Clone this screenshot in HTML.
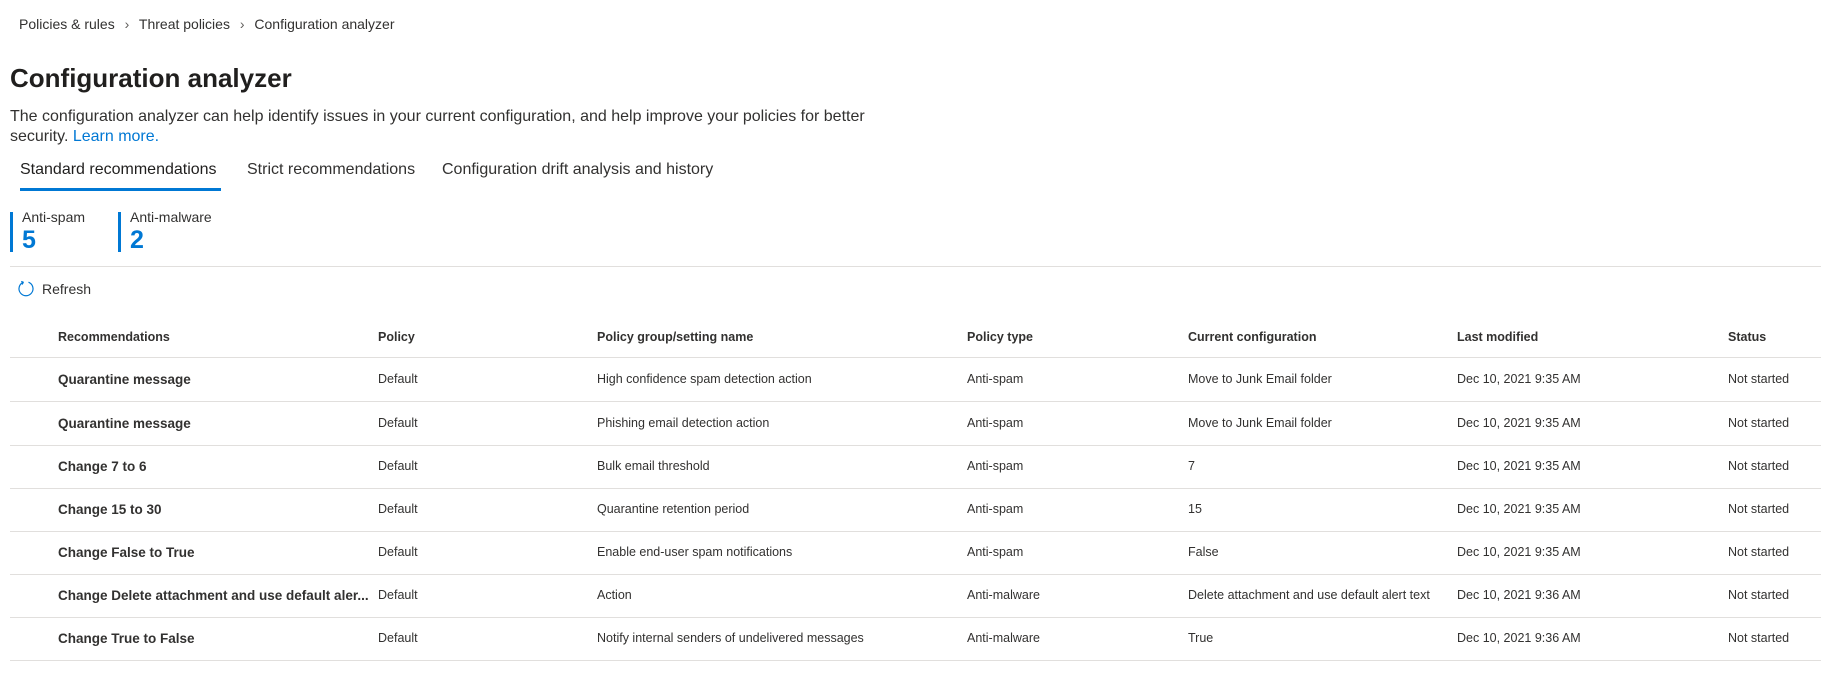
<!DOCTYPE html>
<html><head><style>
body{margin:0;width:1821px;height:678px;background:#fff;font-family:"Liberation Sans",sans-serif;color:#323130;position:relative;overflow:hidden}
.a{position:absolute;white-space:nowrap}
.row{position:absolute;left:10px;right:0;height:43px;border-bottom:1px solid #e1dfdd}
.row span{position:absolute;top:0;line-height:43px;font-size:12.5px;white-space:nowrap}
.row span.b{font-size:13.5px;font-weight:bold;color:#323130}
</style></head><body>
<div class="a" style="left:19px;top:16px;font-size:14px;color:#323130">Policies &amp; rules <span style="color:#605e5c;margin:0 6px">&#8250;</span> Threat policies <span style="color:#605e5c;margin:0 6px">&#8250;</span> Configuration analyzer</div>
<div class="a" style="left:10px;top:63px;font-size:26px;font-weight:bold;color:#201f1e">Configuration analyzer</div>
<div class="a" style="left:10px;top:107px;font-size:16px;line-height:20px;white-space:normal;width:880px">The configuration analyzer can help identify issues in your current configuration, and help improve your policies for better security. <span style="color:#0078d4">Learn more.</span></div>
<div class="a" style="left:20px;top:161px;font-size:16px;color:#201f1e">Standard recommendations</div>
<div class="a" style="left:20px;top:188px;width:201px;height:3px;background:#0078d4"></div>
<div class="a" style="left:247px;top:161px;font-size:16px">Strict recommendations</div>
<div class="a" style="left:442px;top:161px;font-size:16px">Configuration drift analysis and history</div>
<div class="a" style="left:10px;top:212px;width:3px;height:40px;background:#0078d4"></div>
<div class="a" style="left:22px;top:209px;font-size:14px">Anti-spam</div>
<div class="a" style="left:22px;top:226px;font-size:25px;font-weight:bold;color:#0078d4">5</div>
<div class="a" style="left:118px;top:212px;width:3px;height:40px;background:#0078d4"></div>
<div class="a" style="left:130px;top:209px;font-size:14px">Anti-malware</div>
<div class="a" style="left:130px;top:226px;font-size:25px;font-weight:bold;color:#0078d4">2</div>
<div class="a" style="left:10px;right:0;top:266px;height:1px;background:#e1dfdd"></div>
<svg class="a" style="left:17px;top:280px" width="18" height="18" viewBox="0 0 18 18"><path d="M6.5 2.2A7 7 0 1 0 11.5 2.2" fill="none" stroke="#0078d4" stroke-width="1.2"/><path d="M6.5 2.2L5 4.5M6.5 2.2L4.2 1.5" fill="none" stroke="#0078d4" stroke-width="1.2"/></svg>
<div class="a" style="left:42px;top:281px;font-size:14px">Refresh</div>
<div class="row" style="top:317px;height:40px;border-bottom:1px solid #e1dfdd"><span style="left:48px;line-height:40px;font-weight:bold;font-size:12.5px">Recommendations</span><span style="left:368px;line-height:40px;font-weight:bold;font-size:12.5px">Policy</span><span style="left:587px;line-height:40px;font-weight:bold;font-size:12.5px">Policy group/setting name</span><span style="left:957px;line-height:40px;font-weight:bold;font-size:12.5px">Policy type</span><span style="left:1178px;line-height:40px;font-weight:bold;font-size:12.5px">Current configuration</span><span style="left:1447px;line-height:40px;font-weight:bold;font-size:12.5px">Last modified</span><span style="left:1718px;line-height:40px;font-weight:bold;font-size:12.5px">Status</span></div>
<div class="row" style="top:358px"><span class="b" style="left:48px">Quarantine message</span><span style="left:368px">Default</span><span style="left:587px">High confidence spam detection action</span><span style="left:957px">Anti-spam</span><span style="left:1178px">Move to Junk Email folder</span><span style="left:1447px">Dec 10, 2021 9:35 AM</span><span style="left:1718px">Not started</span></div>
<div class="row" style="top:402px"><span class="b" style="left:48px">Quarantine message</span><span style="left:368px">Default</span><span style="left:587px">Phishing email detection action</span><span style="left:957px">Anti-spam</span><span style="left:1178px">Move to Junk Email folder</span><span style="left:1447px">Dec 10, 2021 9:35 AM</span><span style="left:1718px">Not started</span></div>
<div class="row" style="top:445px"><span class="b" style="left:48px">Change 7 to 6</span><span style="left:368px">Default</span><span style="left:587px">Bulk email threshold</span><span style="left:957px">Anti-spam</span><span style="left:1178px">7</span><span style="left:1447px">Dec 10, 2021 9:35 AM</span><span style="left:1718px">Not started</span></div>
<div class="row" style="top:488px"><span class="b" style="left:48px">Change 15 to 30</span><span style="left:368px">Default</span><span style="left:587px">Quarantine retention period</span><span style="left:957px">Anti-spam</span><span style="left:1178px">15</span><span style="left:1447px">Dec 10, 2021 9:35 AM</span><span style="left:1718px">Not started</span></div>
<div class="row" style="top:531px"><span class="b" style="left:48px">Change False to True</span><span style="left:368px">Default</span><span style="left:587px">Enable end-user spam notifications</span><span style="left:957px">Anti-spam</span><span style="left:1178px">False</span><span style="left:1447px">Dec 10, 2021 9:35 AM</span><span style="left:1718px">Not started</span></div>
<div class="row" style="top:574px"><span class="b" style="left:48px">Change Delete attachment and use default aler...</span><span style="left:368px">Default</span><span style="left:587px">Action</span><span style="left:957px">Anti-malware</span><span style="left:1178px">Delete attachment and use default alert text</span><span style="left:1447px">Dec 10, 2021 9:36 AM</span><span style="left:1718px">Not started</span></div>
<div class="row" style="top:617px"><span class="b" style="left:48px">Change True to False</span><span style="left:368px">Default</span><span style="left:587px">Notify internal senders of undelivered messages</span><span style="left:957px">Anti-malware</span><span style="left:1178px">True</span><span style="left:1447px">Dec 10, 2021 9:36 AM</span><span style="left:1718px">Not started</span></div>
</body></html>
